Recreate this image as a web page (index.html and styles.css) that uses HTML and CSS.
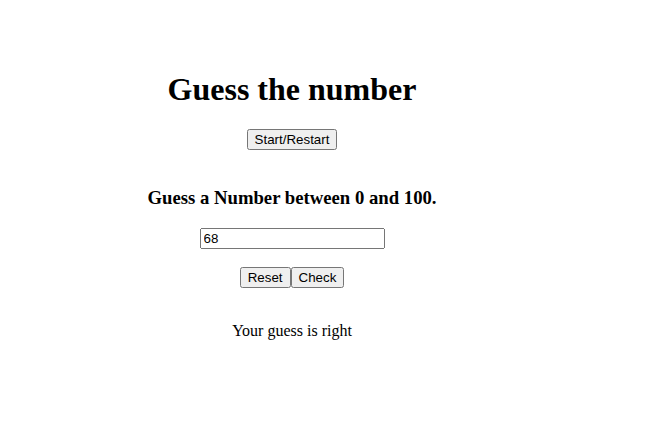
FILE: index.html
```html
<!DOCTYPE html>
<html>
<head>
<meta charset="utf-8">
<title>Guess the number</title>
<link rel="stylesheet" href="styles.css">
</head>
<body>
<div class="app">
  <h1 class="title">Guess the number</h1>
  <div class="row start-row"><button class="btn">Start/Restart</button></div>
  <h3 class="prompt">Guess a Number between 0 and 100.</h3>
  <div class="row input-row"><input class="guess" type="text" value="68"></div>
  <div class="row actions"><button class="btn">Reset</button><button class="btn">Check</button></div>
  <p class="result">Your guess is right</p>
</div>
</body>
</html>
```
FILE: styles.css
```css
html, body {
  margin: 0;
  padding: 0;
  background: #fff;
}
body {
  font-family: "Liberation Serif", "Times New Roman", serif;
  color: #000;
}
.app {
  width: 568px;
  margin-left: 8px;
  padding-top: 71px;
  text-align: center;
}
.title {
  margin: 0;
  font-size: 32px;
  font-weight: bold;
  line-height: 37px;
}
.row {
  line-height: 21px;
  height: 21px;
}
.start-row {
  margin-top: 21px;
}
.btn {
  font-family: "Liberation Sans", Arial, sans-serif;
  font-size: 13.333px;
  vertical-align: top;
}
.prompt {
  margin: 37px 0 0;
  font-size: 18.72px;
  font-weight: bold;
  line-height: 21px;
}
.input-row {
  margin-top: 20px;
}
.guess {
  box-sizing: border-box;
  width: 185px;
  height: 21px;
  font-family: "Liberation Sans", Arial, sans-serif;
  font-size: 13.333px;
  vertical-align: top;
}
.actions {
  margin-top: 18px;
}
.result {
  margin: 34px 0 0;
  font-size: 16px;
  line-height: 18px;
}
```
